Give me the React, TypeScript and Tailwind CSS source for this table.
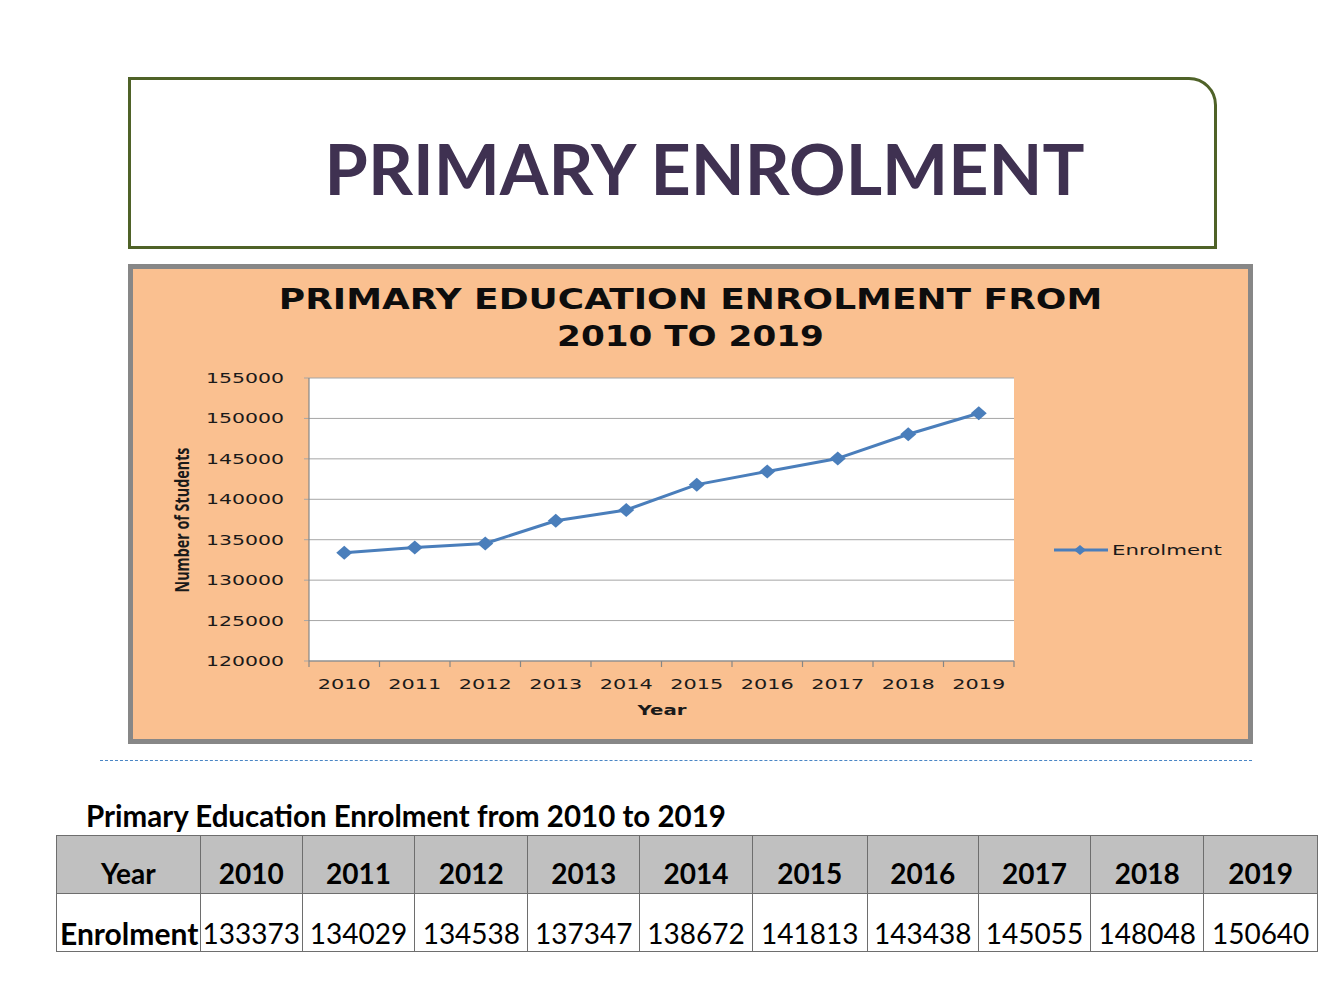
import React from 'react';

const years = [2010, 2011, 2012, 2013, 2014, 2015, 2016, 2017, 2018, 2019];
const values = [133373, 134029, 134538, 137347, 138672, 141813, 143438, 145055, 148048, 150640];
const ticks = [155000, 150000, 145000, 140000, 135000, 130000, 125000, 120000];

// plot area inside the svg
const PL = 176;
const PR = 881;
const PT = 18;
const PB = 301;
const step = (PR - PL) / years.length;
const yOf = (v: number) => PB - ((v - 120000) / 35000) * (PB - PT);
const xOf = (i: number) => PL + step * (i + 0.5);

const chartFont = '"DejaVu Sans", Verdana, sans-serif';

function Diamond({ x, y }: { x: number; y: number }) {
  return <polygon points={`${x},${y - 7} ${x + 8},${y} ${x},${y + 7} ${x - 8},${y}`} fill="#4a7ebb" />;
}

function EnrolmentChart() {
  const pts = values.map((v, i) => `${xOf(i)},${yOf(v)}`).join(' ');
  return (
    <svg width={1115} height={379} className="block">
      <rect x={PL} y={PT} width={PR - PL} height={PB - PT} fill="#ffffff" />
      {ticks.map((t) => (
        <g key={t}>
          <line x1={PL - 5} x2={PR} y1={yOf(t)} y2={yOf(t)} stroke="#a6a6a6" strokeWidth={1} />
          <text
            x={151}
            y={yOf(t) + 5}
            textAnchor="end"
            fontFamily={chartFont}
            fontSize={14}
            fill="#1a1a1a"
            textLength={78}
            lengthAdjust="spacingAndGlyphs"
          >
            {t}
          </text>
        </g>
      ))}
      <line x1={PL} x2={PL} y1={PT} y2={PB} stroke="#868686" strokeWidth={1.2} />
      <line x1={PL} x2={PR} y1={PB} y2={PB} stroke="#868686" strokeWidth={1.2} />
      {Array.from({ length: years.length + 1 }).map((_, i) => (
        <line key={i} x1={PL + step * i} x2={PL + step * i} y1={PB} y2={PB + 6} stroke="#868686" strokeWidth={1.2} />
      ))}
      {years.map((y, i) => (
        <text
          key={y}
          x={xOf(i)}
          y={329}
          textAnchor="middle"
          fontFamily={chartFont}
          fontSize={14}
          fill="#1a1a1a"
          textLength={53}
          lengthAdjust="spacingAndGlyphs"
        >
          {y}
        </text>
      ))}
      <text
        x={529}
        y={355}
        textAnchor="middle"
        fontFamily={chartFont}
        fontWeight="bold"
        fontSize={14}
        fill="#1a1a1a"
        textLength={49}
        lengthAdjust="spacingAndGlyphs"
      >
        Year
      </text>
      <text
        transform="translate(56,160) rotate(-90)"
        textAnchor="middle"
        fontFamily='"Open Sans", sans-serif'
        fontWeight="bold"
        fontSize={19}
        fill="#1a1a1a"
        textLength={145}
        lengthAdjust="spacingAndGlyphs"
      >
        Number of Students
      </text>
      <polyline points={pts} fill="none" stroke="#4a7ebb" strokeWidth={3} strokeLinejoin="round" />
      {values.map((v, i) => (
        <Diamond key={i} x={xOf(i)} y={yOf(v)} />
      ))}
      {/* legend */}
      <line x1={921} x2={975} y1={190} y2={190} stroke="#4a7ebb" strokeWidth={3} />
      <polygon points="947,185 953,190 947,195 941,190" fill="#4a7ebb" />
      <text
        x={979}
        y={195}
        fontFamily={chartFont}
        fontSize={14}
        fill="#1a1a1a"
        textLength={110}
        lengthAdjust="spacingAndGlyphs"
      >
        Enrolment
      </text>
    </svg>
  );
}

const colWidths = ['w-[144px]', 'w-[102px]', 'w-[113px]', 'w-[113px]', 'w-[112px]', 'w-[113px]', 'w-[115px]', 'w-[111px]', 'w-[113px]', 'w-[113px]', 'w-[113px]'];

export default function App() {
  return (
    <div className="w-[1344px] h-[1008px] bg-white flex flex-col overflow-hidden" style={{ fontFamily: 'Lato, "Open Sans", sans-serif' }}>
      {/* Title box */}
      <div className="ml-[128px] mt-[77px] w-[1089px] h-[172px] border-[3px] border-[#4f6228] rounded-tr-[28px] flex items-center justify-center pl-[64px] pt-[10px]">
        <h1 className="text-[70px] font-bold text-[#3f3151] leading-none">PRIMARY ENROLMENT</h1>
      </div>

      {/* Chart box */}
      <div className="ml-[128px] mt-[15px] w-[1125px] h-[480px] border-[5px] border-[#878787] bg-[#fac090] flex flex-col">
        <div
          className="h-[91px] pt-[12px] text-center text-[#0d0d0d] font-bold text-[29px] leading-[37px]"
          style={{ fontFamily: chartFont }}
        >
          <div className="scale-x-[1.24]">PRIMARY EDUCATION ENROLMENT FROM</div>
          <div className="scale-x-[1.18]">2010 TO 2019</div>
        </div>
        <EnrolmentChart />
      </div>

      {/* Dashed separator */}
      <div className="ml-[100px] mt-[16px] w-[1152px] border-t border-dashed border-[#4a86c5]" />

      {/* Table caption */}
      <div className="ml-[86px] mt-[38px] text-[29.5px] font-bold text-black leading-[34px]">
        Primary Education Enrolment from 2010 to 2019
      </div>

      {/* Table */}
      <div className="ml-[56px] mt-[2px] w-[1262px] border border-[#6e6e6e] text-black">
        <div className="flex h-[58px] bg-[#c0c0c0] border-b border-[#6e6e6e]">
          <div className={`${colWidths[0]} border-r border-[#6e6e6e] flex items-end justify-center pb-[2px] text-[28px] leading-[36px] font-bold`}>Year</div>
          {years.map((y, i) => (
            <div
              key={y}
              className={`${colWidths[i + 1]} ${i < years.length - 1 ? 'border-r border-[#6e6e6e]' : ''} flex items-end justify-center pb-[2px] text-[28px] leading-[36px] font-bold`}
            >
              {y}
            </div>
          ))}
        </div>
        <div className="flex h-[57px] bg-white">
          <div className={`${colWidths[0]} border-r border-[#6e6e6e] flex items-end justify-start pl-[3px] pb-[1px] text-[30px] leading-[34px] font-bold`}>Enrolment</div>
          {values.map((v, i) => (
            <div
              key={i}
              className={`${colWidths[i + 1]} ${i < values.length - 1 ? 'border-r border-[#6e6e6e]' : ''} flex items-end justify-center pb-[1px] text-[28px] leading-[34px]`}
            >
              {v}
            </div>
          ))}
        </div>
      </div>
    </div>
  );
}
